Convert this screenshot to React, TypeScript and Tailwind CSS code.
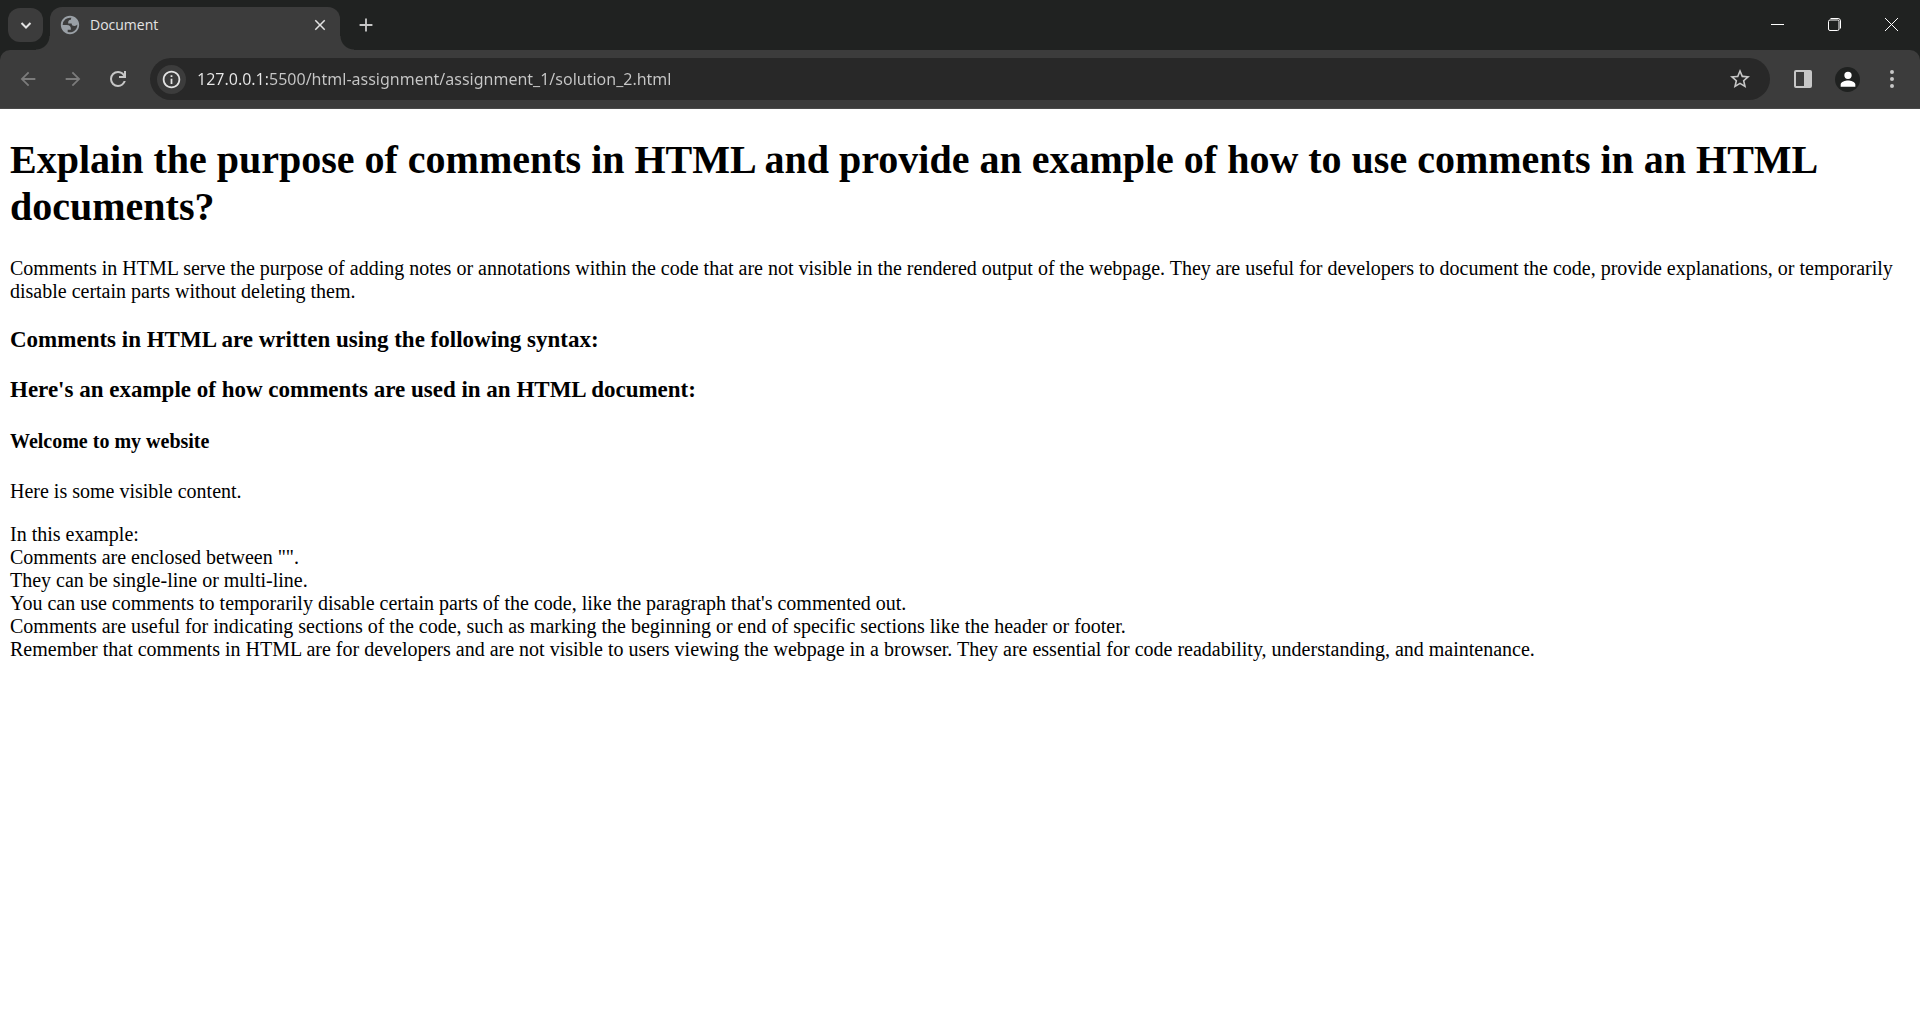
import React from "react";

type IconProps = { d: string; className: string };

/* 24-unit icon drawn as a filled shape */
function Icon({ d, className }: IconProps) {
  return (
    <svg viewBox="0 0 24 24" fill="currentColor" fillRule="evenodd" aria-hidden="true" className={className}>
      <path d={d} />
    </svg>
  );
}

const PATHS = {
  globe:
    "M12 2C6.48 2 2 6.48 2 12s4.48 10 10 10 10-4.48 10-10S17.52 2 12 2zM4 12h4.400c3.407.022 4.922 1.730 4.543 5.127H9.488v2.470a8.004 8.004 0 0 0 10.498-8.083C19.327 12.504 18.332 13 17 13c-2.137 0-3.206-.916-3.206-2.750h-3.748c-.274-2.728.683-4.092 2.870-4.092 0-.975.327-1.597.811-1.970A8.004 8.004 0 0 0 4 12z",
  close: "M19 6.410 17.590 5 12 10.590 6.410 5 5 6.410 10.590 12 5 17.590 6.410 19 12 13.410 17.590 19 19 17.590 13.410 12z",
  plus: "M19 13h-6v6h-2v-6H5v-2h6V5h2v6h6z",
  back: "M20 11H7.830l5.590-5.590L12 4l-8 8 8 8 1.410-1.410L7.830 13H20z",
  forward: "m12 4-1.410 1.410L16.170 11H4v2h12.170l-5.580 5.590L12 20l8-8z",
  reload:
    "M12 20q-3.350 0-5.675-2.325T4 12q0-3.350 2.325-5.675T12 4q1.725 0 3.300.712T18 6.750V4h2v7h-7V9h4.200q-.8-1.400-2.187-2.200T12 6Q9.500 6 7.750 7.750T6 12t1.750 4.250T12 18q1.925 0 3.475-1.100T17.650 14h2.100q-.7 2.650-2.850 4.325T12 20z",
  info: "M11 17h2v-6h-2zm0-8h2V7h-2zm1 13C6.480 22 2 17.520 2 12S6.480 2 12 2s10 4.480 10 10-4.480 10-10 10zm0-2a8 8 0 1 0 0-16 8 8 0 0 0 0 16z",
  star: "m22 9.240-7.190-.62L12 2 9.190 8.630 2 9.240l5.460 4.730L5.820 21 12 17.270 18.180 21l-1.630-7.030zM12 15.400l-3.760 2.270 1-4.280-3.320-2.880 4.380-.38L12 6.100l1.710 4.040 4.380.38-3.320 2.880 1 4.280z",
  panel: "M5 3h14q2 0 2 2v14q0 2-2 2H5q-2 0-2-2V5q0-2 2-2zm0 2v14h8V5z",
  person:
    "M12 12a4 4 0 1 0 0-8 4 4 0 0 0 0 8zm0 1.500c-2.670 0-8 1.340-8 4.200V20.500h16v-2.800c0-2.860-5.330-4.200-8-4.200z",
  menu: "M12 7.700a1.700 1.700 0 1 0 0-3.400 1.700 1.700 0 0 0 0 3.400zm0 6a1.700 1.700 0 1 0 0-3.400 1.700 1.700 0 0 0 0 3.400zm0 6a1.700 1.700 0 1 0 0-3.400 1.700 1.700 0 0 0 0 3.400z",
};

type ButtonProps = { label: string; className: string; children: React.ReactNode };

function IconButton({ label, className, children }: ButtonProps) {
  return (
    <button type="button" aria-label={label} className={`flex shrink-0 items-center justify-center ${className}`}>
      {children}
    </button>
  );
}

function TabStrip() {
  return (
    <div className="flex h-[50px] items-stretch bg-[#202221]">
      <IconButton label="Search tabs" className="mt-2 mr-[7px] ml-2 h-[34px] w-[35px] rounded-xl bg-[#3c3c3c] text-[#e3e3e3]">
        <svg viewBox="0 0 12 12" fill="none" stroke="currentColor" strokeWidth="2" aria-hidden="true" className="size-3">
          <path d="m1.500 4 4.500 4.500L10.500 4" />
        </svg>
      </IconButton>
      <div className="relative mt-[7px] flex w-[290px] items-center rounded-t-xl bg-[#3c3c3c] pr-[11px] pb-[7px] pl-[9px]">
        <span className="absolute bottom-0 -left-[14px] size-[14px] bg-[radial-gradient(circle_at_0_0,transparent_13px,#3c3c3c_14px)]" />
        <span className="absolute -right-[14px] bottom-0 size-[14px] bg-[radial-gradient(circle_at_100%_0,transparent_13px,#3c3c3c_14px)]" />
        <Icon d={PATHS.globe} className="size-[22px] shrink-0 text-[#9aa0a6]" />
        <span className="ml-[9px] grow text-[14px] leading-5 text-[#e3e3e3]">Document</span>
        <IconButton label="Close tab" className="size-[18px] text-[#e3e3e3]">
          <Icon d={PATHS.close} className="size-[18px]" />
        </IconButton>
      </div>
      <IconButton label="New tab" className="ml-[14px] h-[50px] w-[23px] text-[#c7c7c7]">
        <Icon d={PATHS.plus} className="size-[22px]" />
      </IconButton>
      <div className="ml-auto flex text-white">
        <IconButton label="Minimize" className="h-[49px] w-[57px]">
          <svg viewBox="0 0 13 13" aria-hidden="true" className="size-[13px]">
            <path d="M0 6.500h13" stroke="currentColor" />
          </svg>
        </IconButton>
        <IconButton label="Restore" className="h-[49px] w-[57px]">
          <svg viewBox="0 0 13 13" fill="none" stroke="currentColor" aria-hidden="true" className="size-[13px]">
            <rect x="0.500" y="2" width="10.500" height="10.500" rx="1.500" />
            <path d="M2.500.5H10a2.500 2.500 0 0 1 2.500 2.500v7.500" />
          </svg>
        </IconButton>
        <IconButton label="Close" className="h-[49px] w-[57px]">
          <svg viewBox="0 0 13 13" stroke="currentColor" aria-hidden="true" className="size-[13px]">
            <path d="m0 0 13 13M13 0 0 13" />
          </svg>
        </IconButton>
      </div>
    </div>
  );
}

function Toolbar() {
  return (
    <div className="bg-[#202221]">
      <div className="flex h-[59px] items-center rounded-t-[10px] border-b border-[#4a4a4a] bg-[#3c3c3c] pr-3 pl-[14px]">
        <div className="flex gap-[17px]">
          <IconButton label="Back" className="size-7 text-[#7b7b7b]">
            <Icon d={PATHS.back} className="size-[22px]" />
          </IconButton>
          <IconButton label="Forward" className="size-7 text-[#7b7b7b]">
            <Icon d={PATHS.forward} className="size-[22px]" />
          </IconButton>
          <IconButton label="Reload" className="size-7 text-[#c7c7c7]">
            <Icon d={PATHS.reload} className="size-6" />
          </IconButton>
        </div>
        <div className="ml-[18px] flex h-[42px] grow items-center rounded-full bg-[#282828] pr-5 pl-[7px]">
          <IconButton label="View site information" className="size-[29px] rounded-full bg-[#3c3c3c] text-[#e3e3e3]">
            <Icon d={PATHS.info} className="size-[21px]" />
          </IconButton>
          <input
            type="text"
            aria-label="Address"
            defaultValue="127.0.0.1:5500/html-assignment/assignment_1/solution_2.html"
            className="ml-[11px] h-8 min-w-0 grow bg-[linear-gradient(90deg,#e8e8e8_70px,#c7c7c7_70px)] bg-clip-text font-['Noto_Sans',sans-serif] text-[16px] text-transparent outline-none"
          />
          <IconButton label="Bookmark this tab" className="size-5 text-[#c7c7c7]">
            <Icon d={PATHS.star} className="size-6 shrink-0" />
          </IconButton>
        </div>
        <div className="ml-[17px] flex items-center gap-4">
          <IconButton label="Side panel" className="size-8 text-[#c7c7c7]">
            <Icon d={PATHS.panel} className="size-6" />
          </IconButton>
          <IconButton label="Profile" className="size-[25px] rounded-full bg-[#1f2120] text-white">
            <Icon d={PATHS.person} className="size-[22px]" />
          </IconButton>
          <IconButton label="Menu" className="size-8 text-[#c7c7c7]">
            <Icon d={PATHS.menu} className="size-7" />
          </IconButton>
        </div>
      </div>
    </div>
  );
}

const NOTES = [
  "In this example:",
  'Comments are enclosed between "".',
  "They can be single-line or multi-line.",
  "You can use comments to temporarily disable certain parts of the code, like the paragraph that's commented out.",
  "Comments are useful for indicating sections of the code, such as marking the beginning or end of specific sections like the header or footer.",
  "Remember that comments in HTML are for developers and are not visible to users viewing the webpage in a browser. They are essential for code readability, understanding, and maintenance.",
];

function Article() {
  return (
    <main className="px-[10px] pt-[27px] pb-5 font-['Liberation_Serif',serif] text-[20px] leading-[23px] text-black">
      <h1 className="text-[40px] leading-[47px] font-bold">
        Explain the purpose of comments in HTML and provide an example of how to use comments in an HTML documents?
      </h1>
      <p className="mt-[27px]">
        Comments in HTML serve the purpose of adding notes or annotations within the code that are not visible in the
        rendered output of the webpage. They are useful for developers to document the code, provide explanations, or
        temporarily disable certain parts without deleting them.
      </p>
      <h3 className="mt-[23px] text-[23px] leading-[27px] font-bold">
        Comments in HTML are written using the following syntax:
      </h3>
      <h3 className="mt-[23px] text-[23px] leading-[27px] font-bold">
        Here's an example of how comments are used in an HTML document:
      </h3>
      <h4 className="mt-[27px] font-bold">Welcome to my website</h4>
      <p className="mt-[27px]">Here is some visible content.</p>
      <div className="mt-5">
        {NOTES.map((line) => (
          <p key={line}>{line}</p>
        ))}
      </div>
    </main>
  );
}

export default function App() {
  return (
    <div className="min-h-screen bg-white">
      <header className="font-['Open_Sans',sans-serif]">
        <TabStrip />
        <Toolbar />
      </header>
      <Article />
    </div>
  );
}
